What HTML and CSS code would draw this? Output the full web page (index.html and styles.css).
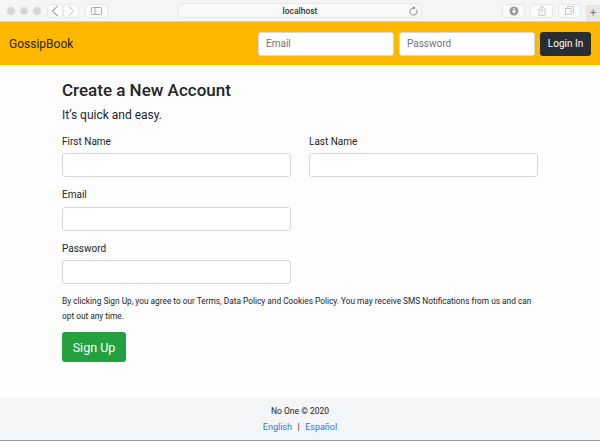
FILE: index.html
```html
<!DOCTYPE html>
<html lang="en">
<head>
    <meta charset="UTF-8">
    <title>GossipBook</title>
    <link rel="stylesheet" href="styles.css">
</head>
<body>
    <div class="browser-bar">
        <div class="lights"><span></span><span></span><span></span></div>
        <div class="nav-buttons">
            <div class="tool-btn small"><svg width="8" height="12" viewBox="0 0 8 12"><path d="M6.5 1 1.5 6l5 5" fill="none" stroke="#777" stroke-width="1"/></svg></div>
            <div class="tool-btn small"><svg width="8" height="12" viewBox="0 0 8 12"><path d="M1.5 1l5 5-5 5" fill="none" stroke="#bbb" stroke-width="1"/></svg></div>
        </div>
        <div class="tool-btn sidebar-btn"><svg width="11" height="8" viewBox="0 0 11 8"><rect x=".5" y=".5" width="10" height="7" rx="1" fill="none" stroke="#aaa"/><path d="M4 .5v7" stroke="#aaa"/></svg></div>
        <div class="url-box">
            <span class="url-text">localhost</span>
            <svg class="reload" width="9" height="10" viewBox="0 0 9 10"><path d="M7.6 3.6A3.6 3.6 0 1 1 4.500 1.900" fill="none" stroke="#888" stroke-width="1"/><path d="M4.200 0 6.600 1.900 4.200 3.600z" fill="#888"/></svg>
        </div>
        <div class="right-tools">
            <div class="tool-btn wide"><svg width="10" height="10" viewBox="0 0 10 10"><circle cx="5" cy="5" r="4.500" fill="#999"/><path d="M5 2v4M3.200 4.600 5 6.800l1.800-2.200" fill="none" stroke="#f5f5f5" stroke-width="1.200"/></svg></div>
            <div class="tool-btn wide"><svg width="8" height="11" viewBox="0 0 10 13"><path d="M3 5H1v7.500h8V5H7M5 9V1M3 3l2-2 2 2" fill="none" stroke="#bbb"/></svg></div>
            <div class="tool-btn wide"><svg width="9" height="9" viewBox="0 0 11 11"><rect x=".5" y="3" width="7" height="7.500" fill="none" stroke="#bbb"/><path d="M3 3V.5h7.500V8H8" fill="none" stroke="#bbb"/></svg></div>
        </div>
        <div class="new-tab">+</div>
    </div>

    <header class="navbar">
        <a class="brand">GossipBook</a>
        <form class="login-form">
            <input class="field nav-field" type="text" placeholder="Email">
            <input class="field nav-field" type="password" placeholder="Password">
            <button class="btn btn-dark" type="button">Login In</button>
        </form>
    </header>

    <main class="content">
        <h1>Create a New Account</h1>
        <p class="lead">It’s quick and easy.</p>
        <div class="form-row first-row">
            <div class="form-group">
                <label>First Name</label>
                <input class="field" type="text">
            </div>
            <div class="form-group">
                <label>Last Name</label>
                <input class="field" type="text">
            </div>
        </div>
        <div class="form-row">
            <div class="form-group">
                <label>Email</label>
                <input class="field" type="text">
            </div>
        </div>
        <div class="form-row">
            <div class="form-group">
                <label>Password</label>
                <input class="field" type="password">
            </div>
        </div>
        <p class="terms">By clicking Sign Up, you agree to our Terms, Data Policy and Cookies Policy. You may receive SMS Notifications from us and can opt out any time.</p>
        <button class="btn btn-green" type="button">Sign Up</button>
    </main>

    <footer class="footer">
        <div>No One © 2020</div>
        <div class="langs"><a>English</a><span class="sep">|</span><a>Español</a></div>
    </footer>
</body>
</html>
```

FILE: styles.css
```css
* {
    box-sizing: border-box;
}

html, body {
    height: 441px;
    overflow: hidden;
}

body {
    margin: 0;
    display: flex;
    flex-direction: column;
    font-family: Roboto, "Liberation Sans", sans-serif;
    color: #212529;
    background-color: #fdfdfe;
}

/* Barra del navegador */
.browser-bar {
    height: 22px;
    flex: none;
    display: flex;
    align-items: center;
    padding-left: 7px;
    background-color: #f5f5f5;
    border-bottom: 1px solid #d4d4d8;
}

.lights {
    display: flex;
    gap: 5px;
    margin-right: 6px;
}

.lights span {
    width: 8px;
    height: 8px;
    border-radius: 50%;
    background-color: #d8d8d8;
}

.nav-buttons {
    display: flex;
    margin-right: 6px;
}

.tool-btn {
    height: 14px;
    display: flex;
    align-items: center;
    justify-content: center;
    background-color: #fbfbfb;
    border: 1px solid #e8e8e8;
    border-radius: 3px;
}

.tool-btn.small {
    width: 16px;
}

.sidebar-btn {
    width: 23px;
}

.url-box {
    width: 246px;
    height: 15px;
    margin-left: 70px;
    padding-right: 3px;
    display: flex;
    align-items: center;
    justify-content: flex-end;
    position: relative;
    background-color: #f9f9f9;
    border: 1px solid #e8e8e8;
    border-radius: 3px;
}

.url-text {
    position: absolute;
    left: 0;
    right: 0;
    text-align: center;
    font-size: 8.5px;
    font-weight: 500;
    color: #333;
}

.right-tools {
    display: flex;
    gap: 5px;
    margin-left: 80px;
}

.tool-btn.wide {
    width: 23px;
}

.new-tab {
    width: 14px;
    height: 16px;
    margin-left: 5px;
    align-self: flex-end;
    font-size: 11px;
    line-height: 16px;
    text-align: center;
    color: #777;
    background-color: #e6e6e6;
}

/* Barra superior */
.navbar {
    height: 43px;
    flex: none;
    display: flex;
    align-items: center;
    justify-content: space-between;
    padding: 0 9px;
    background-color: #ffb700;
}

.brand {
    font-size: 12px;
    color: #212529;
}

.login-form {
    display: flex;
    gap: 5px;
}

.field {
    display: block;
    width: 229px;
    height: 24px;
    padding: 0 7px;
    font-family: inherit;
    font-size: 10px;
    background-color: #fff;
    border: 1px solid #d3d8de;
    border-radius: 3px;
}

.field::placeholder {
    color: #6c757d;
}

.nav-field {
    width: 136px;
}

.btn {
    font-family: inherit;
    border: none;
    color: #fff;
    cursor: pointer;
}

.btn-dark {
    width: 51px;
    height: 24px;
    padding: 0;
    font-size: 10px;
    background-color: #292d34;
    border-radius: 3px;
}

/* Contenido */
.content {
    flex: 1;
    padding: 14px 62px 0;
}

h1 {
    margin: 0;
    font-size: 17px;
    line-height: 22px;
    font-weight: 500;
    color: #212529;
}

.lead {
    margin: 6px 0 0;
    font-size: 12px;
    line-height: 16px;
}

.form-row {
    display: flex;
    gap: 18px;
    margin-top: 12px;
}

.first-row {
    margin-top: 12.5px;
}

.form-group label {
    display: block;
    margin-bottom: 5.5px;
    font-size: 10px;
    line-height: 12px;
}

.terms {
    width: 480px;
    margin: 10px 0 0;
    font-size: 8.3px;
    line-height: 15px;
}

.btn-green {
    display: block;
    width: 64px;
    height: 30px;
    margin-top: 8px;
    padding: 0;
    font-size: 12.5px;
    background-color: #23a03f;
    border-radius: 3px;
}

/* Pie de pagina */
.footer {
    height: 43px;
    flex: none;
    padding-top: 7px;
    font-size: 8.5px;
    line-height: 13px;
    text-align: center;
    background-color: #f4f5f7;
    border-bottom: 1px solid #999;
}

.langs {
    margin-top: 3px;
    font-size: 9px;
}

.langs a {
    color: #1a7af0;
}

.sep {
    margin: 0 5.5px;
    color: #333;
}
```
